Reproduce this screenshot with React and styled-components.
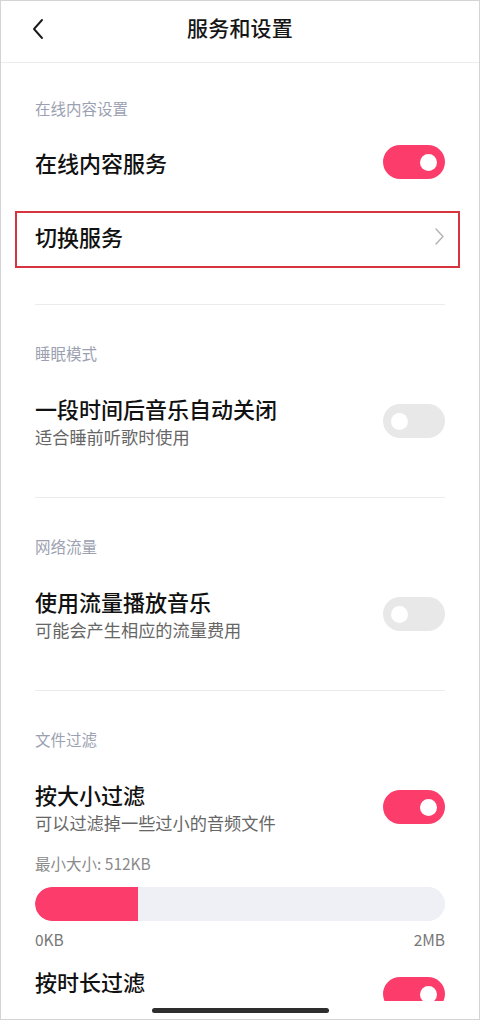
import React from "react";
import styled, { createGlobalStyle } from "styled-components";

const Global = createGlobalStyle`
  html, body { margin: 0; padding: 0; background: #fff; }
  body { font-family: "Noto Sans CJK SC", "Noto Sans", sans-serif; }
  * { box-sizing: border-box; }
`;

const Frame = styled.div`
  width: 480px;
  height: 1020px;
  border: 1px solid #d4d4d4;
  display: flex;
  flex-direction: column;
  overflow: hidden;
  background: #fff;
`;

const Header = styled.header`
  height: 62px;
  flex: none;
  border-bottom: 1px solid #ececec;
  display: flex;
  align-items: center;
  justify-content: center;
  padding-bottom: 10px;
  position: relative;
`;

const BackButton = styled.button`
  position: absolute;
  left: 26px;
  top: 15px;
  width: 22px;
  height: 26px;
  padding: 0;
  border: none;
  background: none;
  display: flex;
  align-items: center;
  justify-content: center;
`;

const Title = styled.h1`
  margin: 0;
  font-size: 21px;
  font-weight: 500;
  color: #161616;
  line-height: 28px;
  letter-spacing: 0.2px;
`;

const Content = styled.main`
  flex: 1;
  overflow: hidden;
  padding: 0 34px;
`;

const Section = styled.section`
  padding: ${(p) => (p.$first ? "35px 0 36px" : "38px 0 49px")};
  border-bottom: ${(p) => (p.$noBorder ? "none" : "1px solid #ececec")};
`;

const SectionLabel = styled.div`
  font-size: 15.5px;
  line-height: 20px;
  color: #9ca1b1;
  margin-bottom: 31px;
`;

const Row = styled.div`
  display: flex;
  align-items: center;
  justify-content: space-between;
  min-height: 28px;
  margin-top: ${(p) => p.$mt || 0}px;
`;

const LinkRow = styled.div`
  display: flex;
  align-items: center;
  justify-content: space-between;
  height: 57px;
  margin: 35px -15px 0 -20px;
  padding: 0 13px 7px 18px;
  border: 2px solid #d8343f;
`;

const TextBlock = styled.div`
  display: flex;
  flex-direction: column;
  min-height: ${(p) => (p.$tall ? "54px" : "0")};
`;

const ItemTitle = styled.div`
  font-size: 22px;
  line-height: 28px;
  font-weight: 500;
  color: #111;
`;

const ItemSub = styled.div`
  font-size: 17.2px;
  line-height: 22px;
  margin-top: 4px;
  color: #666;
`;

const Track = styled.div`
  flex: none;
  width: 62px;
  height: 34px;
  margin: -3px 0;
  border-radius: 17px;
  background: ${(p) => (p.$on ? "#fc3d6b" : "#e8e8e8")};
  display: flex;
  align-items: center;
  justify-content: ${(p) => (p.$on ? "flex-end" : "flex-start")};
  padding: 0 8px;
`;

const Knob = styled.div`
  width: 17px;
  height: 17px;
  border-radius: 50%;
  background: #fff;
`;

const Toggle = ({ on }) => (
  <Track $on={on}>
    <Knob />
  </Track>
);

const SliderCaption = styled.div`
  font-size: 15.5px;
  line-height: 20px;
  color: #8a8a8a;
  margin-top: 19px;
`;

const SliderTrack = styled.div`
  margin-top: 14px;
  height: 34px;
  border-radius: 17px;
  background: #eef0f5;
  overflow: hidden;
  display: flex;
`;

const SliderFill = styled.div`
  height: 100%;
  background: #fc3d6b;
  border-radius: 17px 0 0 17px;
`;

const SliderScale = styled.div`
  margin-top: 8px;
  display: flex;
  justify-content: space-between;
  font-size: 15.5px;
  line-height: 20px;
  color: #777;
`;

const HomeBar = styled.div`
  height: 18px;
  flex: none;
  display: flex;
  align-items: center;
  justify-content: center;
`;

const HomeIndicator = styled.div`
  width: 177px;
  height: 5px;
  border-radius: 3px;
  background: #2e2e2e;
`;

const ChevronLeft = () => (
  <svg width="14" height="22" viewBox="0 0 14 22" fill="none">
    <path d="M11 2 L3 11 L11 20" stroke="#1a1a1a" strokeWidth="1.9" strokeLinecap="round" strokeLinejoin="round" />
  </svg>
);

const ChevronRight = () => (
  <svg width="11" height="19" viewBox="0 0 11 19" fill="none">
    <path d="M2 2 L9 9.5 L2 17" stroke="#b4b4b4" strokeWidth="1.5" strokeLinecap="round" strokeLinejoin="round" />
  </svg>
);

const ToggleItem = ({ title, sub, on, mt, tall }) => (
  <Row $mt={mt}>
    <TextBlock $tall={tall}>
      <ItemTitle>{title}</ItemTitle>
      {sub && <ItemSub>{sub}</ItemSub>}
    </TextBlock>
    <Toggle on={on} />
  </Row>
);

export default function App() {
  const min = 512;
  const max = 2048;
  return (
    <>
      <Global />
      <Frame>
        <Header>
          <BackButton aria-label="返回">
            <ChevronLeft />
          </BackButton>
          <Title>服务和设置</Title>
        </Header>
        <Content>
          <Section $first>
            <SectionLabel>在线内容设置</SectionLabel>
            <ToggleItem title="在线内容服务" on mt={-1} />
            <LinkRow>
              <ItemTitle>切换服务</ItemTitle>
              <ChevronRight />
            </LinkRow>
          </Section>
          <Section>
            <SectionLabel>睡眠模式</SectionLabel>
            <ToggleItem title="一段时间后音乐自动关闭" sub="适合睡前听歌时使用" />
          </Section>
          <Section>
            <SectionLabel>网络流量</SectionLabel>
            <ToggleItem title="使用流量播放音乐" sub="可能会产生相应的流量费用" />
          </Section>
          <Section $noBorder>
            <SectionLabel>文件过滤</SectionLabel>
            <ToggleItem title="按大小过滤" sub="可以过滤掉一些过小的音频文件" on />
            <SliderCaption>最小大小: 512KB</SliderCaption>
            <SliderTrack>
              <SliderFill style={{ width: `${(min / max) * 100}%` }} />
            </SliderTrack>
            <SliderScale>
              <span>0KB</span>
              <span>2MB</span>
            </SliderScale>
            <ToggleItem title="按时长过滤" on tall mt={18} />
          </Section>
        </Content>
        <HomeBar>
          <HomeIndicator />
        </HomeBar>
      </Frame>
    </>
  );
}
